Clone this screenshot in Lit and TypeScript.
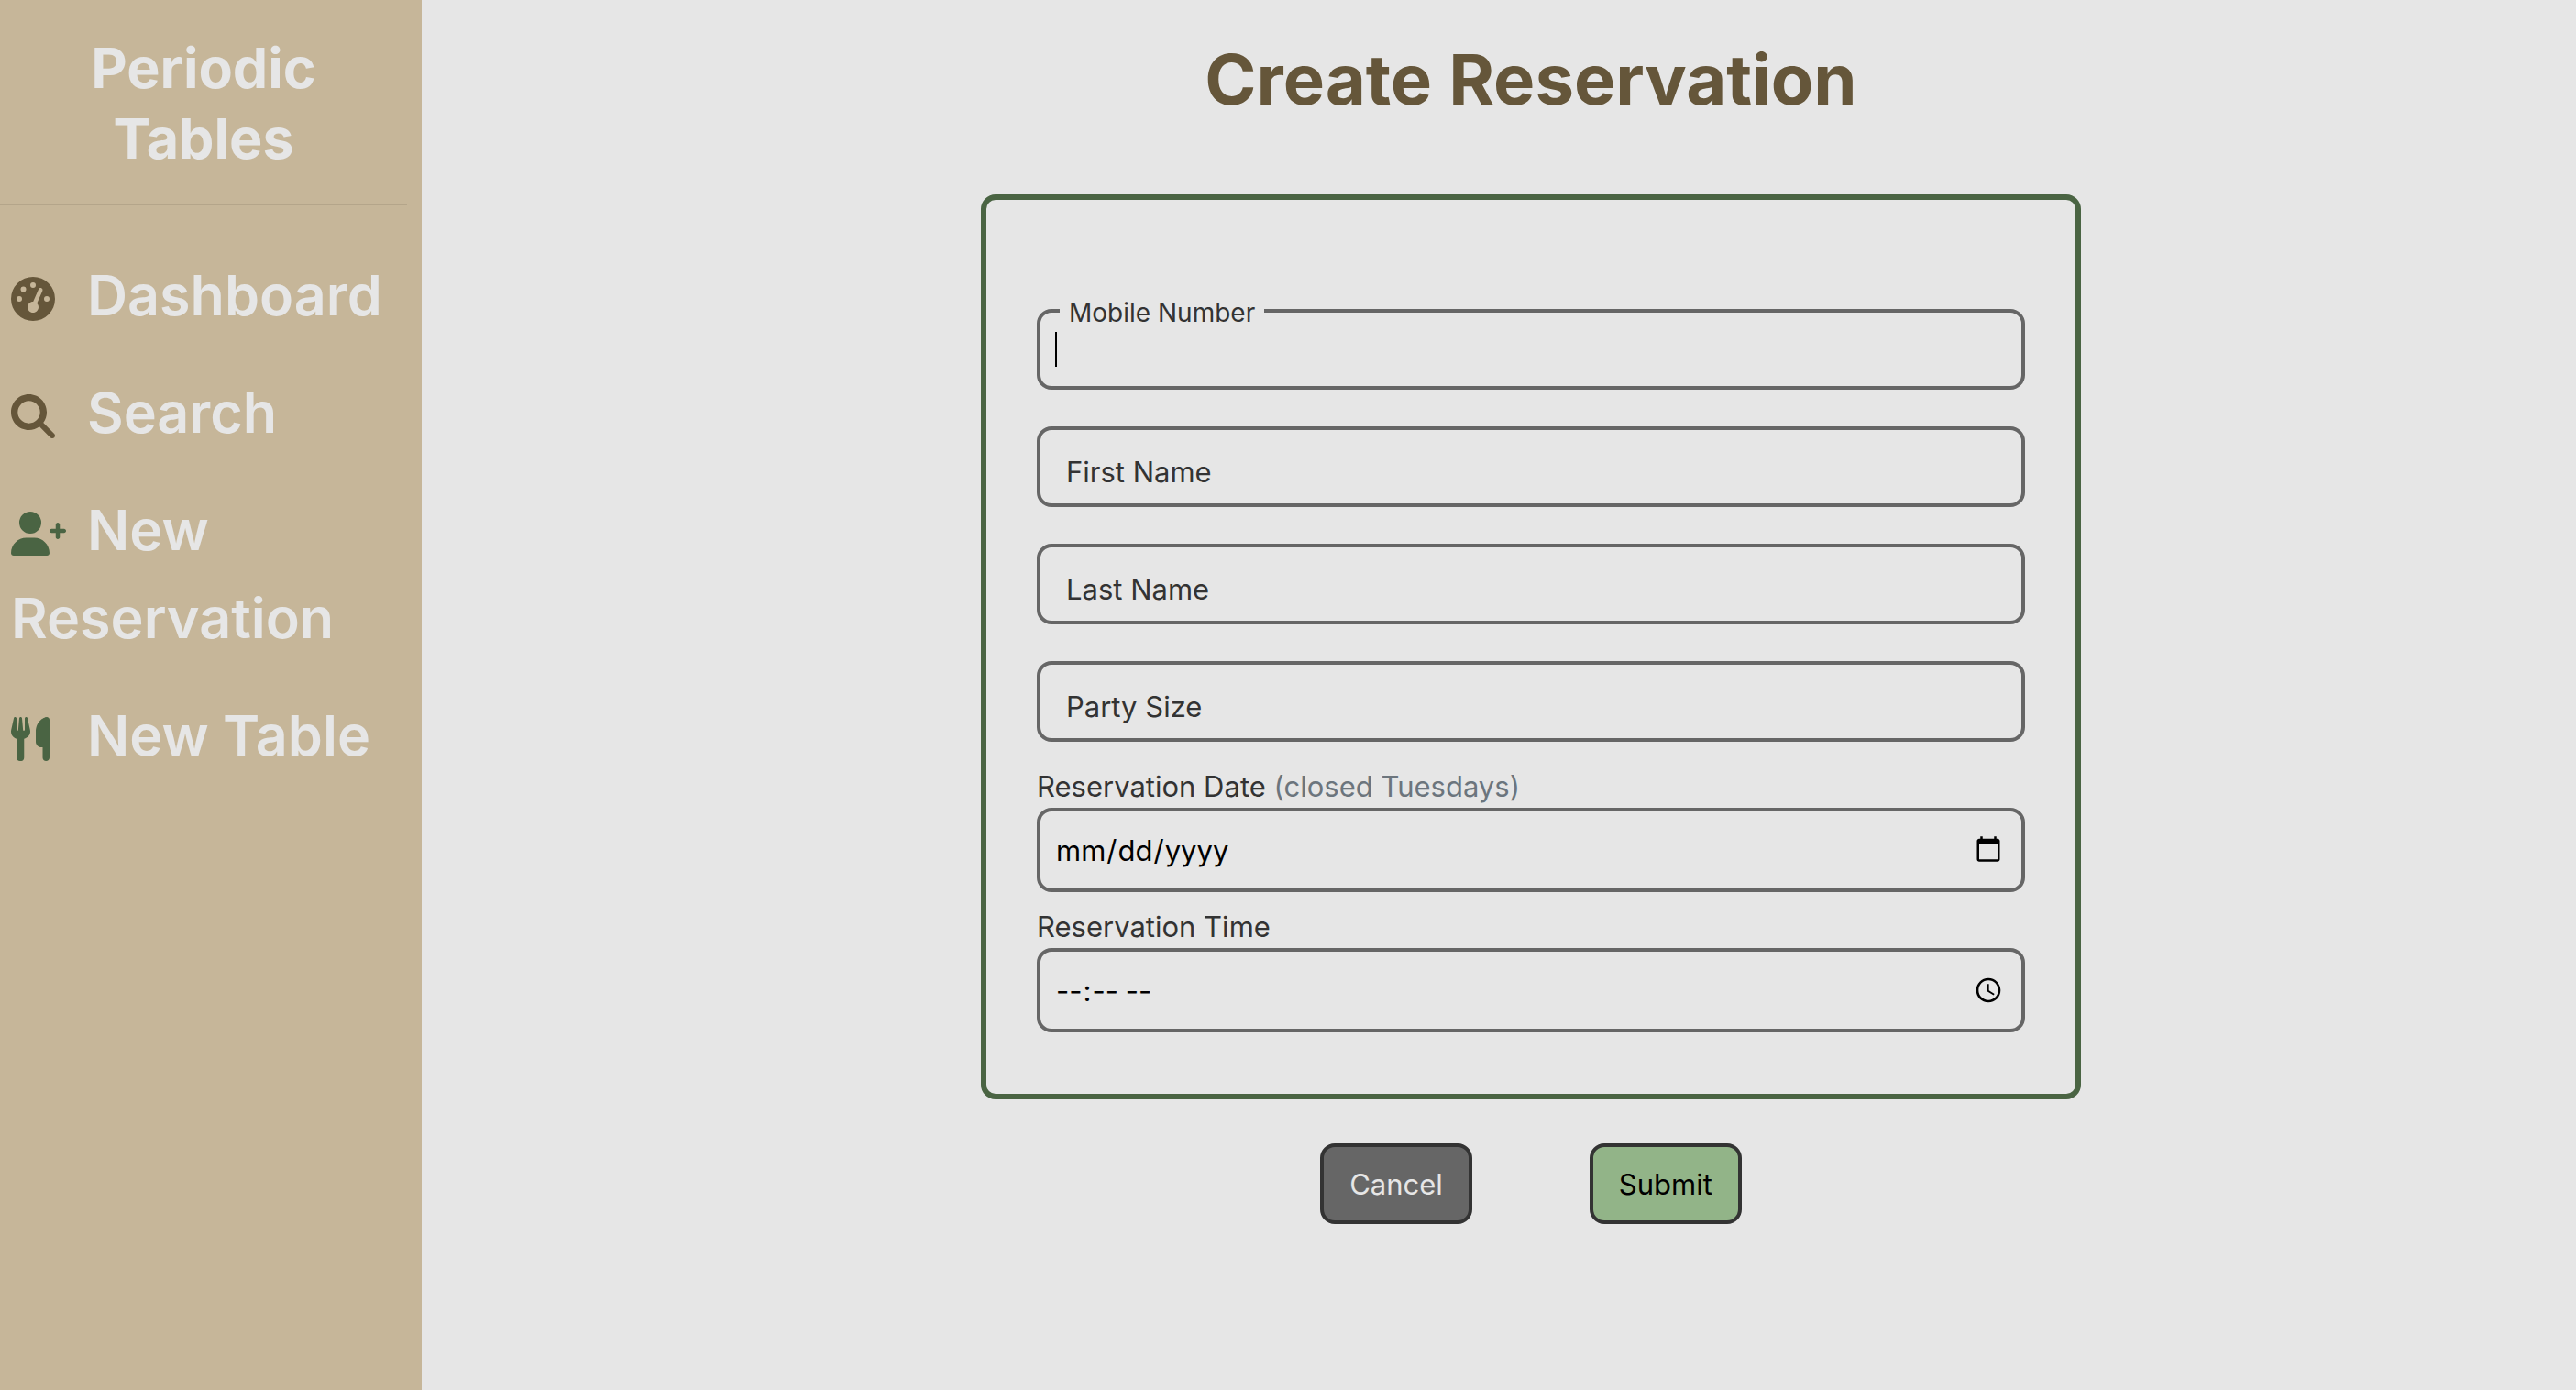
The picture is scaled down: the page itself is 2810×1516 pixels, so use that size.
import { LitElement, html, css, svg } from "lit";
import { customElement } from "lit/decorators.js";

const icons = {
  gauge: svg`<path d="M0 256a256 256 0 1 1 512 0A256 256 0 1 1 0 256zM288 96a32 32 0 1 0 -64 0 32 32 0 1 0 64 0zM256 416c35.3 0 64-28.7 64-64c0-17.4-6.9-33.1-18.1-44.6L366 161.7c5.3-12.1-.2-26.3-12.3-31.6s-26.3 .2-31.6 12.3L257.9 288c-.6 0-1.3 0-1.9 0c-35.3 0-64 28.7-64 64s28.7 64 64 64zM176 144a32 32 0 1 0 -64 0 32 32 0 1 0 64 0zM96 288a32 32 0 1 0 0-64 32 32 0 1 0 0 64zm352-32a32 32 0 1 0 -64 0 32 32 0 1 0 64 0z"/>`,
  search: svg`<path d="M416 208c0 45.9-14.9 88.3-40 122.7L502.6 457.4c12.5 12.5 12.5 32.8 0 45.3s-32.8 12.5-45.3 0L330.7 376c-34.4 25.2-76.8 40-122.7 40C93.1 416 0 322.9 0 208S93.1 0 208 0S416 93.1 416 208zM208 338a130 130 0 1 0 0-260 130 130 0 1 0 0 260z"/>`,
  userPlus: svg`<path d="M96 128a128 128 0 1 1 256 0A128 128 0 1 1 96 128zM0 482.3C0 383.8 79.8 304 178.3 304h91.4C368.2 304 448 383.8 448 482.3c0 16.4-13.3 29.7-29.7 29.7H29.7C13.3 512 0 498.7 0 482.3zM520 296V248H472c-13.3 0-24-10.7-24-24s10.7-24 24-24h48V152c0-13.3 10.7-24 24-24s24 10.7 24 24v48h48c13.3 0 24 10.7 24 24s-10.7 24-24 24H568v48c0 13.3-10.7 24-24 24s-24-10.7-24-24z"/>`,
  utensils: svg`<path d="M416 0C400 0 288 32 288 176V288c0 35.3 28.7 64 64 64h16V472c0 22 17.900 40 40 40s40-18 40-40V352 240 32c0-17.700-14.300-32-32-32zM64 16C64 7.800 57.900 1 49.700 .1S34.200 4.600 32.400 12.500L2.100 148.800C.7 155.100 0 161.500 0 167.900c0 40.200 27 74.200 64 84.500V472c0 22 17.900 40 40 40h16c17.700 0 32-18 32-40V252.400c41-10.300 72-44.300 72-84.500c0-6.400-.7-12.800-2.100-19.100L191.600 12.500c-1.800-8-9.300-13.300-17.400-12.400S160 7.800 160 16V150.200c0 5.400-4.400 9.800-9.800 9.800c-5.100 0-9.300-3.900-9.800-9L127.900 14.600C127.200 6.300 120.300 0 112 0s-15.200 6.300-15.900 14.600L83.700 151c-.5 5.100-4.700 9-9.800 9c-5.400 0-9.800-4.400-9.800-9.800V16z"/>`,
};

const links = [
  { label: "Dashboard", icon: icons.gauge, width: 512, tone: "brown" },
  { label: "Search", icon: icons.search, width: 512, tone: "brown" },
  { label: "New Reservation", icon: icons.userPlus, width: 640, tone: "green" },
  { label: "New Table", icon: icons.utensils, width: 448, tone: "green" },
];

@customElement("side-menu")
export class SideMenu extends LitElement {
  static styles = css`
    :host {
      display: block;
      box-sizing: border-box;
      padding: 36px 16px 0 0;
      background: #c6b699;
      color: #e6e6e6;
    }
    .brand {
      padding: 0 64px;
      font-size: 61px;
      line-height: 77px;
      font-weight: 700;
      text-align: center;
    }
    .rule {
      height: 2px;
      margin: 32px 0 0;
      border: 0;
      background: #b4a58a;
    }
    .nav {
      display: flex;
      flex-direction: column;
      gap: 32px;
      padding: 50px 0 0 12px;
    }
    .link {
      color: inherit;
      font-size: 61px;
      line-height: 96px;
      font-weight: 600;
      text-decoration: none;
    }
    .icon {
      display: inline-block;
      width: 83px;
      height: 48px;
      vertical-align: -6px;
    }
    .glyph {
      display: block;
      height: 48px;
      fill: currentColor;
    }
    .brown {
      color: #65563a;
    }
    .green {
      color: #4a6443;
    }
  `;

  render() {
    return html`
      <div class="brand">Periodic Tables</div>
      <hr class="rule" />
      <nav class="nav">
        ${links.map(
          (l) => html`<a class="link" href="#"
            ><span class="icon ${l.tone}"
              ><svg class="glyph" viewBox="0 0 ${l.width} 512" aria-hidden="true">${l.icon}</svg></span
            >${l.label}</a
          >`
        )}
      </nav>
    `;
  }
}

@customElement("reservation-form")
export class ReservationForm extends LitElement {
  static styles = css`
    :host {
      display: block;
      color: #333;
      font-size: 31px;
    }
    .form {
      display: flex;
      flex-direction: column;
      align-items: center;
    }
    .panel {
      box-sizing: border-box;
      width: 100%;
      padding: 119px 55px 67px;
      border: 6px solid #4a6443;
      border-radius: 16px;
    }
    .stack {
      display: flex;
      flex-direction: column;
      gap: 40px;
      margin-bottom: 26px;
    }
    .field {
      position: relative;
    }
    .input {
      display: block;
      box-sizing: border-box;
      width: 100%;
      height: 88px;
      margin: 0;
      padding: 0 20px 0 16px;
      border: 4px solid #666;
      border-radius: 16px;
      outline: none;
      background: transparent;
      color: #000;
      font: inherit;
    }
    .tall {
      height: 92px;
    }
    .input::-webkit-datetime-edit-fields-wrapper {
      padding: 0;
    }
    .input::-webkit-calendar-picker-indicator {
      width: 32px;
      height: 32px;
      padding: 0;
    }
    .inside {
      position: absolute;
      left: 32px;
      top: 26px;
      line-height: 48px;
      pointer-events: none;
    }
    .floating {
      position: absolute;
      left: 25px;
      top: -16px;
      padding: 0 10px;
      background: #e6e6e6;
      font-size: 28px;
      line-height: 40px;
    }
    .caret {
      position: absolute;
      left: 20px;
      top: 25px;
      width: 2px;
      height: 38px;
      background: #000;
    }
    .label {
      display: block;
      line-height: 46px;
    }
    .input + .label {
      margin-top: 15px;
    }
    .muted {
      color: #6c757d;
    }
    .actions {
      display: flex;
      gap: 128px;
      margin-top: 48px;
    }
    .button {
      height: 88px;
      padding: 0 28px;
      border: 4px solid #333;
      border-radius: 16px;
      font: inherit;
    }
    .cancel {
      background: #666;
      color: #e6e6e6;
    }
    .submit {
      background: #92b488;
      color: #000;
    }
  `;

  render() {
    return html`
      <form class="form">
        <div class="panel">
          <div class="stack">
            <div class="field">
              <input class="input" id="mobile" type="tel" />
              <label class="floating" for="mobile">Mobile Number</label>
              <span class="caret"></span>
            </div>
            <div class="field">
              <input class="input" id="first" type="text" />
              <label class="inside" for="first">First Name</label>
            </div>
            <div class="field">
              <input class="input" id="last" type="text" />
              <label class="inside" for="last">Last Name</label>
            </div>
            <div class="field">
              <input class="input" id="party" type="text" inputmode="numeric" />
              <label class="inside" for="party">Party Size</label>
            </div>
          </div>
          <label class="label" for="date">Reservation Date <span class="muted">(closed Tuesdays)</span></label>
          <input class="input tall" id="date" type="date" />
          <label class="label" for="time">Reservation Time</label>
          <input class="input tall" id="time" type="time" />
        </div>
        <div class="actions">
          <button class="button cancel" type="button">Cancel</button>
          <button class="button submit" type="submit">Submit</button>
        </div>
      </form>
    `;
  }
}

@customElement("app-root")
export class AppRoot extends LitElement {
  static styles = css`
    :host {
      display: grid;
      grid-template-columns: 460px 1fr;
      min-height: 100vh;
      background: #e6e6e6;
      font-family: Inter, "Liberation Sans", sans-serif;
    }
    .main {
      display: flex;
      flex-direction: column;
      align-items: center;
      padding: 38px 0 64px 70px;
    }
    .title {
      margin: 0 0 78px;
      color: #65563a;
      font-size: 76px;
      line-height: 96px;
      font-weight: 700;
    }
    .body {
      width: 100%;
      max-width: 1200px;
    }
  `;

  render() {
    return html`
      <side-menu></side-menu>
      <main class="main">
        <h1 class="title">Create Reservation</h1>
        <reservation-form class="body"></reservation-form>
      </main>
    `;
  }
}
